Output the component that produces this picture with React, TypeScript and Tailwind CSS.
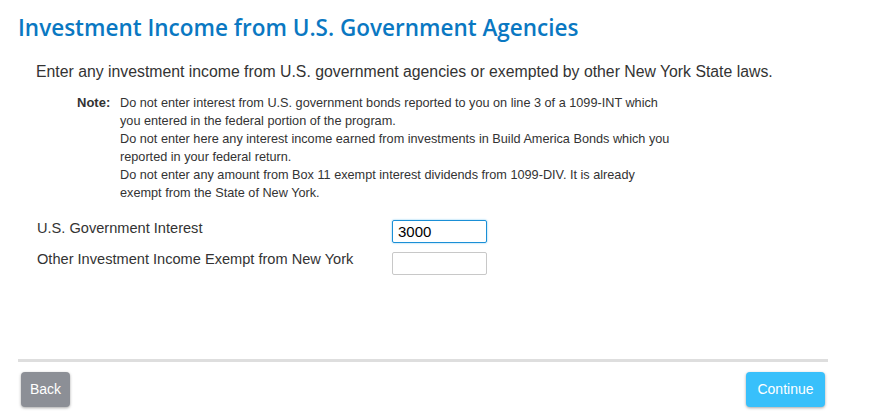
const App: React.FC = () => {
    return (
        <div className="w-[871px] h-[418px] bg-white font-['Liberation_Sans',Arial,sans-serif] text-[#333] overflow-hidden">
            <div className="pl-[18px] pt-[13px]">
                <h1 className="font-['Open_Sans',sans-serif] text-[22.5px] leading-[30px] font-semibold text-[#0a78c2]">
                    Investment Income from U.S. Government Agencies
                </h1>
            </div>

            <p className="pl-[36px] mt-[19px] text-[15.8px] leading-[20px]">
                Enter any investment income from U.S. government agencies or exempted by other New York State laws.
            </p>

            <div className="flex pl-[77px] mt-[12px] text-[12.7px] leading-[18px]">
                <span className="font-bold text-[13px] w-[43px] shrink-0">Note:</span>
                <div className="w-[552px]">
                    <p>Do not enter interest from U.S. government bonds reported to you on line 3 of a 1099-INT which you entered in the federal portion of the program.</p>
                    <p>Do not enter here any interest income earned from investments in Build America Bonds which you reported in your federal return.</p>
                    <p>Do not enter any amount from Box 11 exempt interest dividends from 1099-DIV. It is already exempt from the State of New York.</p>
                </div>
            </div>

            <div className="pl-[37px] mt-[18px] flex flex-col gap-[9px] text-[14.6px]">
                <div className="flex items-start">
                    <label className="w-[355px] leading-[17px]">U.S. Government Interest</label>
                    <input
                        defaultValue="3000"
                        className="w-[95px] h-[23px] border border-[#1a8fd6] rounded-[2px] px-[5px] text-[15px] text-black shadow-[0_0_2px_#6cc0f0] outline-none"
                    />
                </div>
                <div className="flex items-start">
                    <label className="w-[355px] leading-[15px]">Other Investment Income Exempt from New York</label>
                    <input className="w-[95px] h-[23px] border border-[#c8c8c8] rounded-[2px] px-[5px] text-[15px] outline-none" />
                </div>
            </div>

            <div className="ml-[18px] mt-[84px] w-[810px] h-[3px] bg-[#dedede]" />

            <div className="flex justify-between ml-[21px] w-[804px] mt-[10px] text-[14px] text-white">
                <button className="h-[35px] w-[49px] rounded-[4px] bg-[#8c8f96] shadow-[0_1px_3px_rgba(0,0,0,0.35)]">Back</button>
                <button className="h-[35px] w-[79px] rounded-[4px] bg-[#38c0fb] shadow-[0_1px_3px_rgba(0,0,0,0.35)]">Continue</button>
            </div>
        </div>
    )
}

export default App
